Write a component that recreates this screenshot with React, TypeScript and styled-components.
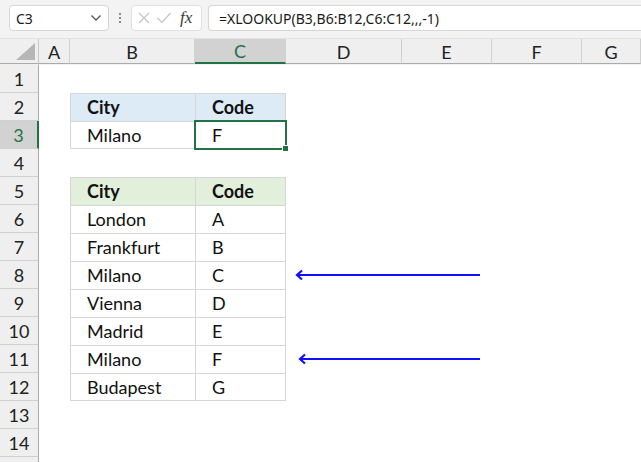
import React from "react";
import styled, { createGlobalStyle } from "styled-components";

const GlobalStyle = createGlobalStyle`
  body {
    margin: 0;
    background: #ffffff;
    overflow: hidden;
  }
`;

const Window = styled.div`
  width: 641px;
  height: 462px;
  overflow: hidden;
  font-family: "Lato", "Liberation Sans", sans-serif;
  background: #ffffff;
`;

const Toolbar = styled.div`
  height: 38px;
  background: #f3f3f3;
  display: flex;
  align-items: flex-start;
  padding: 5px 0 0 9px;
  box-sizing: border-box;
`;

const NameBox = styled.div`
  width: 100px;
  height: 26px;
  box-sizing: border-box;
  background: #ffffff;
  border: 1px solid #d6d6d6;
  border-radius: 4px;
  display: flex;
  align-items: center;
  justify-content: space-between;
  padding: 0 6px 0 6px;
  font-family: "Noto Sans", "Open Sans", sans-serif;
  font-size: 14px;
  color: #1a1a1a;
`;

const Dots = styled.div`
  width: 22px;
  display: flex;
  flex-direction: column;
  align-items: center;
  gap: 2px;
  padding-top: 8px;
  span {
    width: 2px;
    height: 2px;
    background: #8a8a8a;
  }
`;

const FxBox = styled.div`
  width: 71px;
  height: 26px;
  box-sizing: border-box;
  background: #ffffff;
  border: 1px solid #e0e0e0;
  border-radius: 4px;
  display: flex;
  align-items: center;
  padding: 0 4px 0 5px;
  gap: 5px;
`;

const Fx = styled.span`
  font-family: "Liberation Serif", serif;
  font-style: italic;
  font-size: 17px;
  color: #3a3a3a;
  margin-left: 3px;
`;

const FormulaInput = styled.div`
  flex: 1;
  margin-left: 6px;
  height: 26px;
  box-sizing: border-box;
  background: #ffffff;
  border: 1px solid #d6d6d6;
  border-right: none;
  border-radius: 4px 0 0 4px;
  display: flex;
  align-items: center;
  padding-left: 10px;
  font-family: "Noto Sans", "Open Sans", sans-serif;
  font-size: 14px;
  color: #1a1a1a;
`;

const Sheet = styled.div`
  position: relative;
`;

const COLS = "39px 31px 125px 91px 116px 90px 90px 1fr";

const HeaderRow = styled.div`
  display: grid;
  grid-template-columns: ${COLS};
  height: 27px;
  background: #efefef;
  border-top: 1px solid #e2e2e2;
  box-sizing: border-box;
`;

const Corner = styled.div`
  position: relative;
  border-right: 1px solid #c8c8c8;
  border-bottom: 1px solid #ababab;
  &::after {
    content: "";
    position: absolute;
    right: 3px;
    bottom: 3px;
    width: 0;
    height: 0;
    border-left: 19px solid transparent;
    border-bottom: 17px solid #b6b6b6;
  }
`;

const ColHead = styled.div<{ $active?: boolean }>`
  display: flex;
  align-items: center;
  justify-content: center;
  font-size: 18px;
  color: ${p => (p.$active ? "#217346" : "#222222")};
  background: ${p => (p.$active ? "#d2d2d2" : "transparent")};
  border-right: 1px solid #d0d0d0;
  border-bottom: ${p => (p.$active ? "2px solid #217346" : "1px solid #ababab")};
  box-sizing: border-box;
  padding-top: 1px;
`;

const Row = styled.div`
  display: grid;
  grid-template-columns: ${COLS};
  height: 28px;
`;

const RowHead = styled.div<{ $active?: boolean }>`
  display: flex;
  align-items: center;
  justify-content: center;
  font-size: 18px;
  background: ${p => (p.$active ? "#d2d2d2" : "#efefef")};
  color: ${p => (p.$active ? "#217346" : "#222222")};
  border-bottom: 1px solid #d0d0d0;
  border-right: ${p => (p.$active ? "2px solid #217346" : "1px solid #ababab")};
  box-sizing: border-box;
`;

type Fill = "none" | "blue" | "green" | "white";

const fills: Record<Fill, string> = {
  none: "transparent",
  blue: "#ddebf7",
  green: "#e2efda",
  white: "#ffffff",
};

const Cell = styled.div<{
  $fill?: Fill;
  $table?: boolean;
  $right?: boolean;
  $bottom?: boolean;
  $bold?: boolean;
}>`
  position: relative;
  display: flex;
  align-items: center;
  padding-left: 17px;
  box-sizing: border-box;
  font-size: 18px;
  color: #111111;
  font-weight: ${p => (p.$bold ? 700 : 400)};
  background: ${p => fills[p.$fill || "none"]};
  box-shadow: ${p =>
    p.$table
      ? [
          "inset 1px 1px 0 #d6d6d6",
          p.$right ? "inset -1px 0 0 #d6d6d6" : "",
          p.$bottom ? "inset 0 -1px 0 #d6d6d6" : "",
        ]
          .filter(Boolean)
          .join(", ")
      : "none"};
`;

const ActiveFrame = styled.div`
  position: absolute;
  left: -1px;
  top: -1px;
  right: -1px;
  bottom: -1px;
  border: 2px solid #217346;
  pointer-events: none;
  &::after {
    content: "";
    position: absolute;
    right: -4px;
    bottom: -4px;
    width: 5px;
    height: 5px;
    background: #217346;
    border: 1px solid #ffffff;
  }
`;

const Arrow = styled.svg`
  position: absolute;
  left: 0;
  top: 0;
  overflow: visible;
  pointer-events: none;
`;

const letters = ["A", "B", "C", "D", "E", "F", "G"];

type CellSpec = {
  text?: string;
  fill?: Fill;
  bold?: boolean;
  table?: boolean;
  right?: boolean;
  bottom?: boolean;
  active?: boolean;
};

const cities = [
  ["London", "A"],
  ["Frankfurt", "B"],
  ["Milano", "C"],
  ["Vienna", "D"],
  ["Madrid", "E"],
  ["Milano", "F"],
  ["Budapest", "G"],
];

function buildRows(): Record<number, [CellSpec, CellSpec]> {
  const r: Record<number, [CellSpec, CellSpec]> = {
    2: [
      { text: "City", fill: "blue", bold: true, table: true },
      { text: "Code", fill: "blue", bold: true, table: true, right: true },
    ],
    3: [
      { text: "Milano", table: true, bottom: true },
      { text: "F", table: true, bottom: true, right: true, active: true },
    ],
    5: [
      { text: "City", fill: "green", bold: true, table: true },
      { text: "Code", fill: "green", bold: true, table: true, right: true },
    ],
  };
  cities.forEach(([c, k], i) => {
    const last = i === cities.length - 1;
    r[6 + i] = [
      { text: c, table: true, bottom: last },
      { text: k, table: true, right: true, bottom: last },
    ];
  });
  return r;
}

const tableRows = buildRows();

function BlueArrow({ x1, x2, y }: { x1: number; x2: number; y: number }) {
  return (
    <Arrow width="641" height="462">
      <defs>
        <filter id={"glow" + y} x="-10%" y="-300%" width="120%" height="700%">
          <feGaussianBlur in="SourceGraphic" stdDeviation="2.5" />
        </filter>
      </defs>
      <g filter={"url(#glow" + y + ")"} opacity="0.45" transform="translate(3 4)">
        <line x1={x1} y1={y} x2={x2} y2={y} stroke="#5050ff" strokeWidth="3.5" />
      </g>
      <line x1={x1 + 1} y1={y} x2={x2} y2={y} stroke="#1010ff" strokeWidth="2.2" />
      <path
        d={`M ${x1 + 5} ${y - 4.5} L ${x1} ${y} L ${x1 + 5} ${y + 4.5}`}
        fill="none"
        stroke="#1010ff"
        strokeWidth="2.2"
      />
    </Arrow>
  );
}

export default function App() {
  return (
    <Window>
      <GlobalStyle />
      <Toolbar>
        <NameBox>
          <span>C3</span>
          <svg width="12" height="8" viewBox="0 0 12 8">
            <path d="M1.5 1.5 L6 6 L10.5 1.5" fill="none" stroke="#555" strokeWidth="1.3" />
          </svg>
        </NameBox>
        <Dots>
          <span />
          <span />
          <span />
        </Dots>
        <FxBox>
          <svg width="14" height="14" viewBox="0 0 14 14">
            <path d="M2 2 L12 12 M12 2 L2 12" stroke="#c4c4c4" strokeWidth="1.2" />
          </svg>
          <svg width="16" height="14" viewBox="0 0 16 14">
            <path d="M1.5 7 L6 11.5 L14.5 2" fill="none" stroke="#c4c4c4" strokeWidth="1.2" />
          </svg>
          <Fx>fx</Fx>
        </FxBox>
        <FormulaInput>=XLOOKUP(B3,B6:B12,C6:C12,,,-1)</FormulaInput>
      </Toolbar>
      <Sheet>
        <HeaderRow>
          <Corner />
          {letters.map(l => (
            <ColHead key={l} $active={l === "C"}>
              {l}
            </ColHead>
          ))}
          <ColHead />
        </HeaderRow>
        {Array.from({ length: 15 }, (_, i) => i + 1).map(n => {
          const spec = tableRows[n];
          return (
            <Row key={n}>
              <RowHead $active={n === 3}>{n < 15 ? n : ""}</RowHead>
              <Cell />
              {spec ? (
                spec.map((c, j) => (
                  <Cell
                    key={j}
                    $fill={c.fill}
                    $bold={c.bold}
                    $table={c.table}
                    $right={c.right}
                    $bottom={c.bottom}
                  >
                    {c.text}
                    {c.active && <ActiveFrame />}
                  </Cell>
                ))
              ) : (
                <>
                  <Cell />
                  <Cell />
                </>
              )}
              <Cell />
              <Cell />
              <Cell />
              <Cell />
            </Row>
          );
        })}
        <BlueArrow x1={297} x2={480} y={237} />
        <BlueArrow x1={300} x2={480} y={321} />
      </Sheet>
    </Window>
  );
}
